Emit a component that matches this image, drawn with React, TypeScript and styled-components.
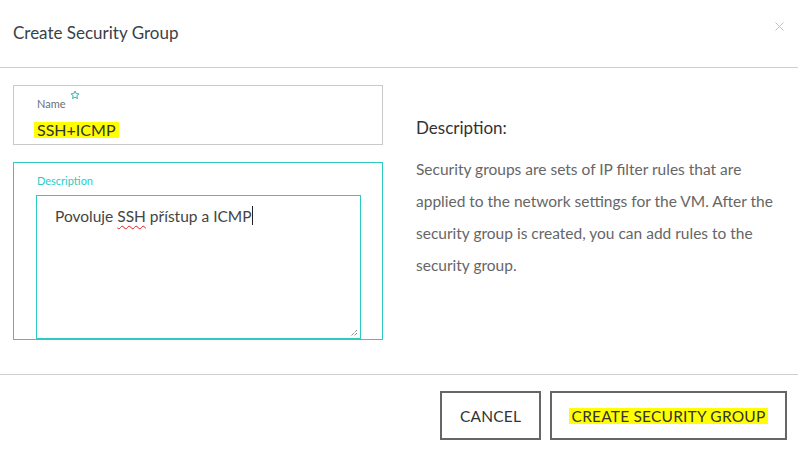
import React from "react";
import styled, { createGlobalStyle } from "styled-components";

const Global = createGlobalStyle`
  html, body { margin: 0; padding: 0; background: #fff; }
  body { font-family: Lato, "Open Sans", "Liberation Sans", sans-serif; color: #333; }
  * { box-sizing: border-box; }
`;

const Dialog = styled.div`
  width: 798px;
  height: 451px;
  display: flex;
  flex-direction: column;
  background: #fff;
`;

const Header = styled.header`
  position: relative;
  height: 68px;
  border-bottom: 1px solid #cfcfcf;
  display: flex;
  align-items: center;
  padding: 0 13px 2px;
`;

const Title = styled.h1`
  margin: 0;
  font-size: 17px;
  font-weight: 400;
  color: #3a3f4a;
`;

const Close = styled.button`
  position: absolute;
  top: 20px;
  right: 13px;
  width: 12px;
  height: 12px;
  padding: 0;
  border: 0;
  background: none;
  display: flex;
  align-items: center;
  justify-content: center;
`;

const Body = styled.main`
  height: 307px;
  border-bottom: 1px solid #cfcfcf;
  display: grid;
  grid-template-columns: 370px 1fr;
  column-gap: 33px;
  padding: 17px 12px 0 13px;
`;

const LeftCol = styled.div`
  display: flex;
  flex-direction: column;
  gap: 17px;
`;

const Field = styled.div<{ $active?: boolean; $h: number }>`
  position: relative;
  height: ${(p) => p.$h}px;
  border: 1px solid ${(p) => (p.$active ? "#2ecbc3" : "#c9c9c9")};
  padding: 11px 0 0 23px;
  display: flex;
  flex-direction: column;
`;

const Label = styled.label<{ $active?: boolean }>`
  display: inline-flex;
  align-items: flex-start;
  gap: 4px;
  font-size: 11px;
  line-height: 13px;
  color: ${(p) => (p.$active ? "#2ecbc3" : "#6b6f78")};
`;

const Star = styled.span`
  margin-top: -7px;
  display: inline-flex;
`;

const Value = styled.div`
  margin-top: 12px;
  margin-left: -3px;
  font-size: 16px;
  line-height: 16px;
  height: 16px;
  color: #333;
`;

const Mark = styled.mark`
  display: inline-block;
  background: #ffff00;
  color: inherit;
  padding: 0 3px;
  line-height: 16px;
  height: 16px;
  white-space: nowrap;
`;

const TextArea = styled.div`
  position: relative;
  margin-top: 8px;
  margin-left: -1px;
  width: 325px;
  flex: 1;
  border: 1px solid #2ecbc3;
  border-bottom-width: 2px;
  margin-bottom: -1px;
  padding: 8px 18px;
  font-size: 15.5px;
  line-height: 24px;
  color: #444;
`;

const Spell = styled.span`
  text-decoration: underline wavy #e02020;
  text-decoration-thickness: 1px;
  text-underline-offset: 3px;
`;

const Caret = styled.span`
  display: inline-block;
  width: 1px;
  height: 19px;
  background: #222;
  vertical-align: -3px;
`;

const Grip = styled.span`
  position: absolute;
  right: 2px;
  bottom: 1px;
  display: flex;
`;

const RightCol = styled.aside`
  padding-top: 33px;
`;

const Heading = styled.h2`
  margin: 0 0 15px;
  font-size: 17px;
  font-weight: 400;
  color: #333;
  line-height: 20px;
`;

const Para = styled.p`
  margin: 0;
  font-size: 15.5px;
  line-height: 32px;
  color: #666;
`;

const Footer = styled.footer`
  display: flex;
  justify-content: flex-end;
  gap: 9px;
  padding: 16px 11px 0 0;
`;

const Button = styled.button<{ $w: number }>`
  width: ${(p) => p.$w}px;
  height: 49px;
  padding: 0;
  border: 2px solid #666;
  background: #fff;
  font-family: inherit;
  font-size: 15.5px;
  color: #333;
  letter-spacing: 0.2px;
  white-space: nowrap;
  display: flex;
  align-items: center;
  justify-content: center;
`;

export default function App() {
  return (
    <>
      <Global />
      <Dialog>
        <Header>
          <Title>Create Security Group</Title>
          <Close aria-label="close">
            <svg width="9" height="9" viewBox="0 0 9 9">
              <path d="M0.5 0.5 L8.5 8.5 M8.5 0.5 L0.5 8.5" stroke="#b9c0cf" strokeWidth="1" />
            </svg>
          </Close>
        </Header>
        <Body>
          <LeftCol>
            <Field $h={60}>
              <Label>
                Name
                <Star>
                  <svg width="10" height="10" viewBox="0 0 24 24">
                    <path
                      d="M12 2.5l2.9 6.2 6.6.7-4.9 4.5 1.4 6.6L12 17.2l-5.9 3.3 1.4-6.6-4.9-4.5 6.6-.7z"
                      fill="none"
                      stroke="#2aa9a2"
                      strokeWidth="2.2"
                      strokeLinejoin="round"
                    />
                  </svg>
                </Star>
              </Label>
              <Value>
                <Mark>SSH+ICMP</Mark>
              </Value>
            </Field>
            <Field $h={178} $active>
              <Label $active>Description</Label>
              <TextArea>
                Povoluje <Spell>SSH</Spell> přístup a ICMP
                <Caret />
                <Grip>
                  <svg width="8" height="8" viewBox="0 0 8 8">
                    <path d="M7 1 L1 7 M7 4 L4 7" stroke="#555" strokeWidth="1" strokeDasharray="1 1" />
                  </svg>
                </Grip>
              </TextArea>
            </Field>
          </LeftCol>
          <RightCol>
            <Heading>Description:</Heading>
            <Para>
              Security groups are sets of IP filter rules that are applied to the network settings for the VM. After the
              security group is created, you can add rules to the security group.
            </Para>
          </RightCol>
        </Body>
        <Footer>
          <Button $w={101}>CANCEL</Button>
          <Button $w={237}>
            <Mark>CREATE SECURITY GROUP</Mark>
          </Button>
        </Footer>
      </Dialog>
    </>
  );
}
